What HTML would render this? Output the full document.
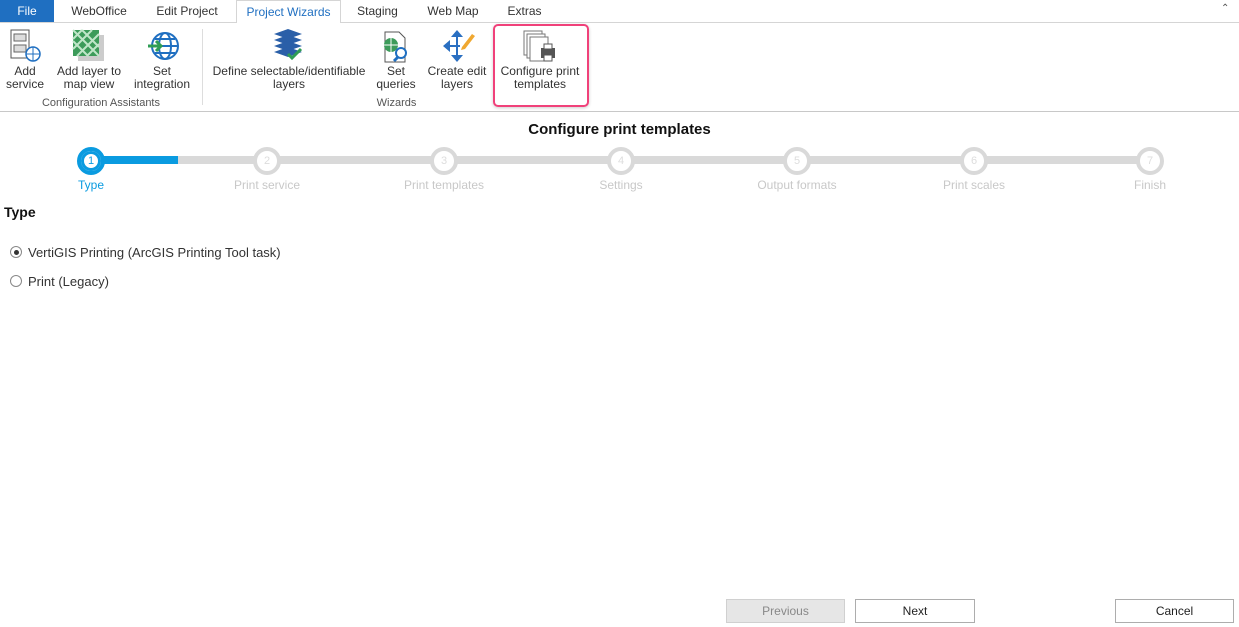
<!DOCTYPE html>
<html><head><style>
body{margin:0;width:1239px;height:627px;background:#fff;font-family:"Liberation Sans",sans-serif;position:relative;overflow:hidden;color:#222}
.a{position:absolute}
.tab{position:absolute;top:0;height:22px;line-height:23px;font-size:12px;text-align:center;color:#333}
.lbl{position:absolute;font-size:12px;line-height:13px;text-align:center;color:#333}
.step{position:absolute;top:147px;width:20px;height:20px;border-radius:50%;border:4px solid #d9d9d9;background:#fff;color:#ddd;font-size:11px;text-align:center;line-height:20px}
.sl{position:absolute;top:178px;font-size:12px;color:#c8c8c8;width:140px;text-align:center}
.btn{position:absolute;top:599px;height:22px;border:1px solid #adadad;background:#fff;font-size:12px;text-align:center;line-height:22px;color:#222}
</style></head><body>
<div class="a" style="left:0;top:0;width:1239px;height:22px;background:#fff;border-bottom:1px solid #d5d5d5"></div>
<div class="tab" style="left:0;width:54px;background:#1f6fc1;color:#fff">File</div>
<div class="tab" style="left:60px;width:78px">WebOffice</div>
<div class="tab" style="left:145px;width:84px">Edit Project</div>
<div class="tab" style="left:236px;width:103px;height:23px;border:1px solid #d5d5d5;border-bottom:none;background:#fff;color:#1f6fc1">Project Wizards</div>
<div class="tab" style="left:345px;width:65px">Staging</div>
<div class="tab" style="left:416px;width:74px">Web Map</div>
<div class="tab" style="left:497px;width:55px">Extras</div>
<div class="a" style="left:1221px;top:3px;font-size:10px;color:#555">&#8963;</div>
<div class="a" style="left:0;top:23px;width:1239px;height:88px;background:#fff;border-bottom:1px solid #c8c8c8"></div>
<div class="a" style="left:202px;top:29px;width:1px;height:76px;background:#ddd"></div>
<svg class="a" style="left:10px;top:29px" width="32" height="34"><rect x="1" y="1" width="18" height="28" fill="#fff" stroke="#555"/><rect x="4" y="5" width="12" height="7" fill="#ddd" stroke="#666"/><rect x="4" y="16" width="12" height="7" fill="#ddd" stroke="#666"/><circle cx="23" cy="25" r="7" fill="#fff" stroke="#1f6fc1" stroke-width="1.5"/><path d="M16 25h14M23 18v14" stroke="#1f6fc1"/></svg>
<svg class="a" style="left:72px;top:29px" width="34" height="34"><rect x="6" y="6" width="26" height="26" fill="#ccc"/><rect x="1" y="1" width="26" height="26" fill="#3c9b5a"/><path d="M1 10l9-9M1 20l19-19M5 27l22-22M15 27l12-12M1 1l26 26M10 1l17 17M1 12l15 15" stroke="#bfe6c8" stroke-width="2"/></svg>
<svg class="a" style="left:147px;top:30px" width="34" height="32"><circle cx="18" cy="16" r="13" fill="#fff" stroke="#1f6fc1" stroke-width="2"/><ellipse cx="18" cy="16" rx="6" ry="13" fill="none" stroke="#1f6fc1" stroke-width="2"/><path d="M5 16h26M8 9h20M8 23h20" stroke="#1f6fc1" stroke-width="2"/><path d="M1 16h12M9 11l5 5-5 5" stroke="#2f9d55" stroke-width="3" fill="none"/></svg>
<svg class="a" style="left:272px;top:28px" width="32" height="34"><path d="M2 6l14-5 14 5-14 5z" fill="#2a5fa8"/><path d="M2 12l14-5 14 5-14 5z" fill="#2a5fa8"/><path d="M2 18l14-5 14 5-14 5z" fill="#2a5fa8"/><path d="M2 24l14-5 14 5-14 5z" fill="#2a5fa8"/><path d="M16 26l4 4 9-9" stroke="#2f9d55" stroke-width="3" fill="none"/></svg>
<svg class="a" style="left:381px;top:31px" width="32" height="32"><path d="M4 1h14l6 6v24H4z" fill="#fff" stroke="#555"/><circle cx="10" cy="14" r="7" fill="#3c9b5a"/><path d="M3 14h14M10 7v14" stroke="#fff"/><circle cx="20" cy="22" r="5" fill="#fff" stroke="#1f6fc1" stroke-width="2"/><path d="M17 26l-4 4" stroke="#1f6fc1" stroke-width="3"/></svg>
<svg class="a" style="left:442px;top:29px" width="34" height="34"><path d="M15 1l-6 7h12zM15 33l-6-7h12zM1 17l7-6v12z" fill="#2a6fc1"/><path d="M15 8v18M8 17h10" stroke="#2a6fc1" stroke-width="2"/><path d="M20 18l10-13 3 2-10 13-4 1z" fill="#f0a830"/></svg>
<svg class="a" style="left:523px;top:30px" width="34" height="34"><rect x="1" y="1" width="18" height="24" fill="#fff" stroke="#777"/><rect x="4" y="4" width="18" height="24" fill="#fff" stroke="#777"/><rect x="7" y="7" width="18" height="24" fill="#fff" stroke="#777"/><rect x="18" y="18" width="14" height="10" fill="#555"/><rect x="21" y="14" width="8" height="5" fill="#fff" stroke="#555"/><rect x="21" y="25" width="8" height="6" fill="#fff" stroke="#555"/></svg>
<div class="lbl" style="left:0;top:65px;width:50px">Add<br>service</div>
<div class="lbl" style="left:50px;top:65px;width:78px">Add layer to<br>map view</div>
<div class="lbl" style="left:128px;top:65px;width:68px">Set<br>integration</div>
<div class="lbl" style="left:0;top:97px;width:202px;color:#555;font-size:11px">Configuration Assistants</div>
<div class="lbl" style="left:205px;top:65px;width:168px">Define selectable/identifiable<br>layers</div>
<div class="lbl" style="left:373px;top:65px;width:46px">Set<br>queries</div>
<div class="lbl" style="left:423px;top:65px;width:68px">Create edit<br>layers</div>
<div class="lbl" style="left:205px;top:97px;width:383px;color:#555;font-size:11px">Wizards</div>
<div class="lbl" style="left:494px;top:65px;width:92px">Configure print<br>templates</div>
<div class="a" style="left:493px;top:24px;width:92px;height:79px;border:2px solid #f0417a;border-radius:5px;box-shadow:0 1px 3px rgba(0,0,0,.2)"></div>
<div class="a" style="left:0;top:121px;width:1239px;text-align:center;font-weight:bold;font-size:15px;color:#111">Configure print templates</div>
<div class="a" style="left:91px;top:156px;width:1059px;height:8px;background:#d9d9d9"></div>
<div class="a" style="left:91px;top:156px;width:87px;height:8px;background:#0a9be0"></div>
<div class="step" style="left:77px;border-color:#0a9be0;background:#fff;color:#0a9be0;box-shadow:inset 0 0 0 3px #0a9be0">1</div>
<div class="step" style="left:253px">2</div><div class="step" style="left:430px">3</div><div class="step" style="left:607px">4</div><div class="step" style="left:783px">5</div><div class="step" style="left:960px">6</div><div class="step" style="left:1136px">7</div>
<div class="sl" style="left:21px;color:#0a9be0">Type</div>
<div class="sl" style="left:197px">Print service</div>
<div class="sl" style="left:374px">Print templates</div>
<div class="sl" style="left:551px">Settings</div>
<div class="sl" style="left:727px">Output formats</div>
<div class="sl" style="left:904px">Print scales</div>
<div class="sl" style="left:1080px">Finish</div>
<div class="a" style="left:4px;top:204px;font-weight:bold;font-size:14px;color:#111">Type</div>
<div class="a" style="left:10px;top:246px;width:10px;height:10px;border:1px solid #888;border-radius:50%"><div style="margin:2.5px;width:5px;height:5px;border-radius:50%;background:#333"></div></div>
<div class="a" style="left:28px;top:245px;font-size:13px;color:#333">VertiGIS Printing (ArcGIS Printing Tool task)</div>
<div class="a" style="left:10px;top:275px;width:10px;height:10px;border:1px solid #888;border-radius:50%"></div>
<div class="a" style="left:28px;top:274px;font-size:13px;color:#333">Print (Legacy)</div>
<div class="btn" style="left:726px;width:117px;background:#e6e6e6;border-color:#d0d0d0;color:#888">Previous</div>
<div class="btn" style="left:855px;width:118px">Next</div>
<div class="btn" style="left:1115px;width:117px">Cancel</div>
</body></html>
